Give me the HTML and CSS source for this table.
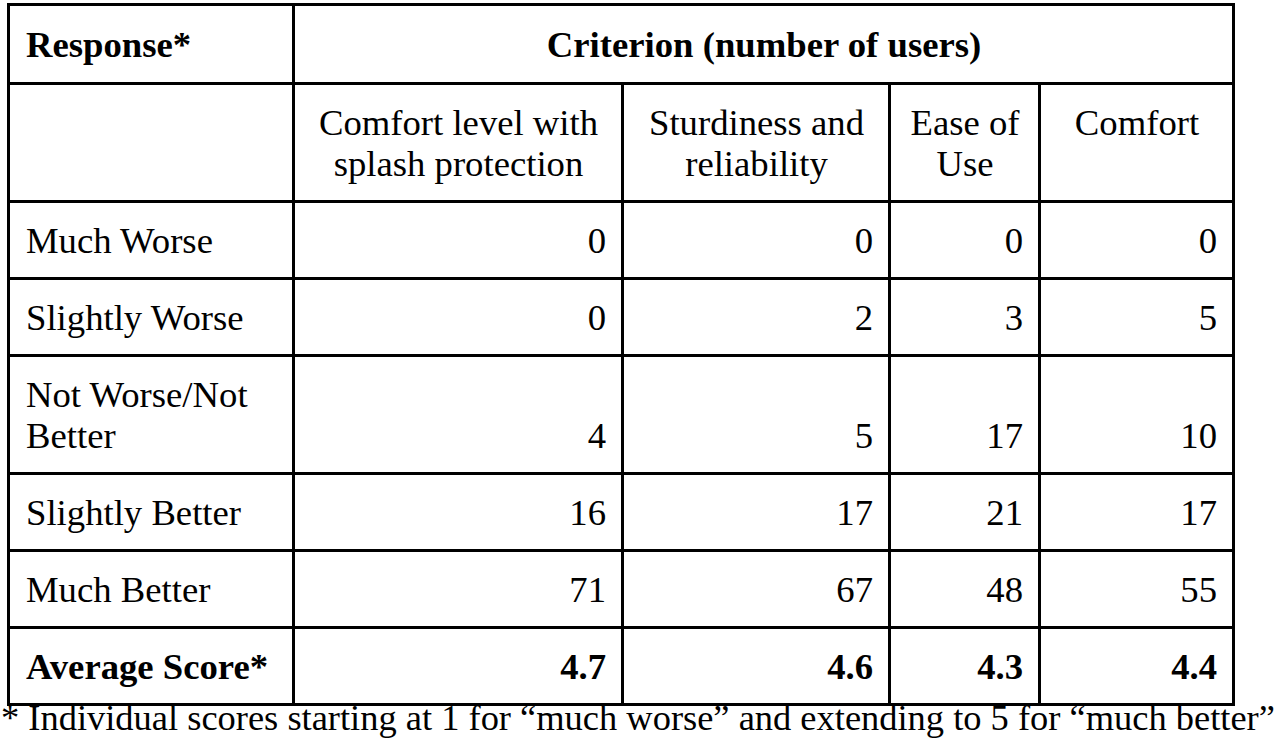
FILE: index.html
```html
<!DOCTYPE html>
<html lang="en">
<head>
<meta charset="utf-8">
<title>Criterion table</title>
<link rel="stylesheet" href="styles.css">
</head>
<body>
<table class="data">
  <colgroup>
    <col class="c-resp">
    <col class="c-splash">
    <col class="c-sturdy">
    <col class="c-ease">
    <col class="c-comfort">
  </colgroup>
  <thead>
    <tr>
      <th class="h-left">Response*</th>
      <th class="h-center" colspan="4">Criterion (number of users)</th>
    </tr>
    <tr class="sub">
      <td></td>
      <td>Comfort level with splash protection</td>
      <td>Sturdiness and reliability</td>
      <td>Ease of Use</td>
      <td>Comfort</td>
    </tr>
  </thead>
  <tbody>
    <tr>
      <td class="label">Much Worse</td>
      <td class="num">0</td><td class="num">0</td><td class="num">0</td><td class="num">0</td>
    </tr>
    <tr>
      <td class="label">Slightly Worse</td>
      <td class="num">0</td><td class="num">2</td><td class="num">3</td><td class="num">5</td>
    </tr>
    <tr>
      <td class="label">Not Worse/Not Better</td>
      <td class="num">4</td><td class="num">5</td><td class="num">17</td><td class="num">10</td>
    </tr>
    <tr>
      <td class="label">Slightly Better</td>
      <td class="num">16</td><td class="num">17</td><td class="num">21</td><td class="num">17</td>
    </tr>
    <tr>
      <td class="label">Much Better</td>
      <td class="num">71</td><td class="num">67</td><td class="num">48</td><td class="num">55</td>
    </tr>
    <tr class="avg">
      <td class="label">Average Score*</td>
      <td class="num">4.7</td><td class="num">4.6</td><td class="num">4.3</td><td class="num">4.4</td>
    </tr>
  </tbody>
</table>
<p class="note">* Individual scores starting at 1 for “much worse” and extending to 5 for “much better”</p>
</body>
</html>
```

FILE: styles.css
```css
html, body {
  margin: 0;
  padding: 0;
  background: #fff;
}

body {
  font-family: "Liberation Serif", "Times New Roman", serif;
  font-size: 36.7px;
  line-height: 41px;
  color: #000;
  overflow: hidden;
}

.data {
  border-collapse: collapse;
  table-layout: fixed;
  width: 1225px;
  margin: 3px 0 0 7px;
}

.c-resp { width: 285px; }
.c-splash { width: 329px; }
.c-sturdy { width: 267px; }
.c-ease { width: 150px; }
.c-comfort { width: 194px; }

.data th,
.data td {
  border: 3px solid #000;
  padding: 17px 15px 16px 16px;
  vertical-align: top;
  font-weight: normal;
}

.data th {
  font-weight: bold;
  padding-top: 18px;
  padding-bottom: 17px;
}

.h-left { text-align: left; }
.h-center { text-align: center; }

.sub td {
  text-align: center;
}

.data .label {
  text-align: left;
}

.data .num {
  text-align: right;
  vertical-align: bottom;
}

.avg td {
  font-weight: bold;
}

.note {
  margin: -8px 0 0 1px;
  font-size: 36.45px;
  white-space: nowrap;
}
```
